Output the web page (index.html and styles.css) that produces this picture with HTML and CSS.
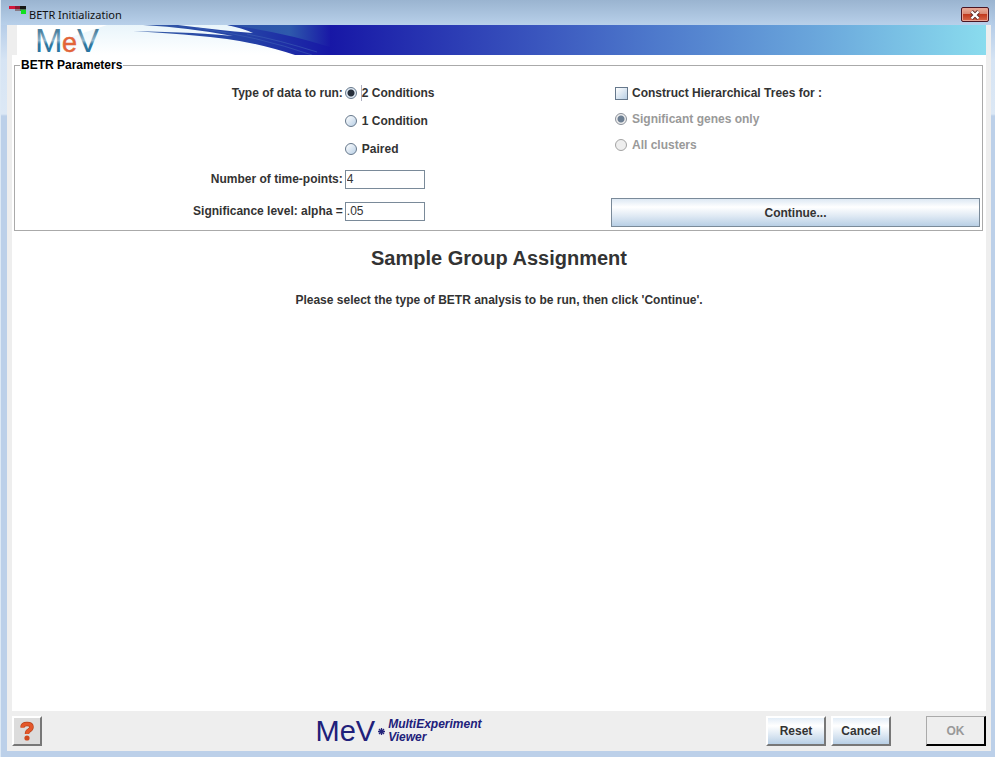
FILE: index.html
```html
<!DOCTYPE html>
<html lang="en">
<head>
<meta charset="utf-8">
<title>BETR Initialization</title>
<link rel="stylesheet" href="styles.css">
</head>
<body>
<div class="window">
  <header class="titlebar">
    <svg class="app-icon" width="17" height="9" viewBox="0 0 17 9" aria-hidden="true">
      <path fill="#d4163c" d="M0 0h6v3H0z"/><path fill="#8e1630" d="M6 0h5v3H6z"/><path fill="#161616" d="M11 0h6v3h-6z"/>
      <path fill="#8a7882" d="M6 3h5v2H6z"/><path fill="#4a7a50" d="M11 3h6v2h-6z"/><path fill="#10e020" d="M12 4h5v4h-5z"/>
    </svg>
    <span class="title">BETR Initialization</span>
    <button class="close" type="button" aria-label="Close">
      <svg width="12" height="10" viewBox="0 0 12 10" aria-hidden="true">
        <path d="M2.500 1.500l7 7M9.500 1.500l-7 7" stroke="#5a2a2a" stroke-width="4" fill="none"/>
        <path d="M2.500 1.500l7 7M9.500 1.500l-7 7" stroke="#fff" stroke-width="2.400" fill="none"/>
      </svg>
    </button>
  </header>

  <form class="dialog">
    <div class="banner">
      <svg class="banner-art" width="313" height="30" viewBox="0 0 313 30" role="img" aria-label="MeV">
        <defs>
          <linearGradient id="steel" x1="0" y1="0" x2="0" y2="1">
            <stop offset="0.250" stop-color="#4a7f9e"/><stop offset="0.500" stop-color="#8fb5cb"/>
            <stop offset="0.600" stop-color="#2f779f"/><stop offset="1" stop-color="#2474a4"/>
          </linearGradient>
          <linearGradient id="paper" x1="0" y1="0" x2="0" y2="1">
            <stop offset="0" stop-color="#e9f5fb"/><stop offset="1" stop-color="#fff"/>
          </linearGradient>
          <linearGradient id="wave" x1="0" y1="0" x2="1" y2="0">
            <stop offset="0" stop-color="#3c63a8"/><stop offset="0.300" stop-color="#2a4ca6"/>
            <stop offset="0.600" stop-color="#2340a6"/><stop offset="1" stop-color="#1717a6"/>
          </linearGradient>
          <linearGradient id="sheen" x1="0" y1="0" x2="1" y2="0">
            <stop offset="0" stop-color="#2c50a8"/><stop offset="0.600" stop-color="#2e5aac"/><stop offset="1" stop-color="#1919a6"/>
          </linearGradient>
        </defs>
        <path fill="#fff" d="M0 0h313v30H0z"/>
        <path fill="url(#paper)" d="M90 0H313V30H0Z"/>
        <path fill="url(#wave)" d="M116 6Q185 7.500 216 11Q175 3 126 0H161Q200 5 236 8Q225 3 210 0H313V30H278Q240 18 210 14Q170 9 116 6Z"/>
        <path fill="url(#sheen)" d="M211 0H313V22Q262 6 211 0Z"/>
        <path d="M180 3Q240 11 295 30M230 9Q262 15 300 27" fill="none" stroke="#4468b8" opacity="0.500"/>
        <g font-family="Liberation Sans, sans-serif" font-size="33" font-weight="400">
          <text x="18" y="27" fill="url(#steel)">M</text>
          <text x="60" y="27" fill="url(#steel)">V</text>
          <text x="45" y="27" fill="#e2643a" stroke="#e2643a" stroke-width="0.500" font-size="27">e</text>
        </g>
      </svg>
      <div class="banner-fade"></div>
    </div>

    <main class="content">
      <fieldset class="params">
        <legend>BETR Parameters</legend>
        <div class="columns">
          <div class="settings">
            <span class="caption" id="data-type">Type of data to run:</span>
            <div class="choice"><input type="radio" name="type" id="two" aria-describedby="data-type" checked><label class="focused" for="two">2 Conditions</label></div>
            <div class="choice under"><input type="radio" name="type" id="one"><label for="one">1 Condition</label></div>
            <div class="choice under"><input type="radio" name="type" id="paired"><label for="paired">Paired</label></div>
            <label class="caption" for="points">Number of time-points:</label>
            <input class="field" type="text" id="points" value="4">
            <label class="caption" for="alpha">Significance level: alpha =</label>
            <input class="field" type="text" id="alpha" value=".05">
          </div>
          <div class="trees">
            <div class="choice"><input type="checkbox" id="trees"><label for="trees">Construct Hierarchical Trees for :</label></div>
            <div class="choice"><input type="radio" name="scope" id="genes" checked disabled><label for="genes">Significant genes only</label></div>
            <div class="choice"><input type="radio" name="scope" id="clusters" disabled><label for="clusters">All clusters</label></div>
            <button class="continue" type="button">Continue...</button>
          </div>
        </div>
      </fieldset>
      <section class="assignment">
        <h1>Sample Group Assignment</h1>
        <p>Please select the type of BETR analysis to be run, then click 'Continue'.</p>
      </section>
    </main>

    <footer class="actions">
      <button class="raised help" type="button" aria-label="Help">
        <svg width="16" height="22" viewBox="0 0 16 22" aria-hidden="true">
          <path d="M3.500 7.500Q3.500 4 8 4Q12.500 4 12.500 7Q12.500 9 10 10.500Q8 11.500 8 14" fill="none" stroke="#b8431c" stroke-width="4.500"/>
          <path d="M3.500 7.500Q3.500 4 8 4Q12.500 4 12.500 7Q12.500 9 10 10.500Q8 11.500 8 14" fill="none" stroke="#e4572a" stroke-width="3.200"/>
          <circle cx="8" cy="18" r="2.600" fill="#d04a20"/>
        </svg>
      </button>
      <div class="brand">
        <span class="brand-name">MeV</span>
        <svg width="7" height="7" viewBox="0 0 7 7" aria-hidden="true"><path d="M3.500 0v7M0 3.500h7M1 1l5 5M6 1l-5 5" stroke="#24247a" stroke-width="1.300"/></svg>
        <span class="brand-sub">MultiExperiment<br>Viewer</span>
      </div>
      <div class="buttons">
        <button class="raised" type="reset">Reset</button>
        <button class="raised" type="button">Cancel</button>
        <button class="ok" type="submit" disabled>OK</button>
      </div>
    </footer>
  </form>
</div>
</body>
</html>
```
FILE: styles.css
```css
* { box-sizing: border-box; }

body {
  margin: 0;
  font: bold 12px/16px "Liberation Sans", Arial, sans-serif;
  color: #333;
}

button, input { font: inherit; color: inherit; margin: 0; }

.window {
  display: flex;
  flex-direction: column;
  min-height: 100vh;
  padding: 0 4px 6px 6px;
  background: linear-gradient(#9ab4d0, #b6cde8 25px, #d6e4f4 60px, #dce8f5 114px, #bcd0e9 116px);
  border-left: 1px solid #dde9f5;
}

/* Title bar */
.titlebar {
  display: flex;
  align-items: flex-start;
  height: 25px;
  margin: 0 -1px 0 -6px;
  padding: 6px 3px 0 8px;
  background: linear-gradient(#9ab4d0, #b8d0ea);
}
.title {
  flex: 1;
  margin-left: 3px;
  font: 11px/18px "Noto Sans", sans-serif;
  color: #111;
}
.close {
  display: flex;
  align-items: center;
  justify-content: center;
  width: 28px;
  height: 15px;
  margin-top: 1px;
  padding: 0;
  border: 1px solid #4b1622;
  border-radius: 2px;
  background: linear-gradient(#eab09c, #d98873 45%, #c23a1e 50%, #d8694c);
  box-shadow: inset 0 0 0 1px #e9a595;
}

.dialog {
  flex: 1;
  display: flex;
  flex-direction: column;
  padding: 0 5px;
  background: #eee;
}

/* Banner */
.banner { display: flex; height: 30px; margin-left: 5px; }
.banner-art { flex: none; overflow: visible; }
.banner-fade {
  flex: 1;
  background: linear-gradient(to right, #1717a6, #4d78cb 49%, #6ba8dc 75%, #8adcee);
}

.content { flex: 1; background: #fff; }

/* Parameters */
.params {
  min-width: 0;
  margin: 2px 3px 0 2px;
  padding: 6px 2px 3px 0;
  border: 1px solid #aaa;
}
.params legend {
  margin-left: 5px;
  padding: 0 1px;
  color: #000;
}
.columns { display: grid; grid-template-columns: 596fr 369fr; }
.settings {
  display: grid;
  grid-template-columns: 55% 1fr;
  grid-template-rows: 28px 28px 28px 32px 32px;
  column-gap: 2px;
  align-items: center;
}
.caption { text-align: right; }
.under { grid-column: 2; }
.choice { display: flex; align-items: center; gap: 4px; }
.choice label { padding-left: 1px; }
.choice .focused { border-left: 1px solid #b0b0c0; padding-left: 0; }

input[type="radio"], input[type="checkbox"] {
  appearance: none;
  width: 12px;
  height: 12px;
  border: 1px solid #66788c;
  background: linear-gradient(135deg, #fff, #b8cfe5);
}
input[type="checkbox"] { width: 13px; height: 13px; margin-right: -1px; }
input[type="radio"] { border-radius: 50%; }
input[type="radio"]:checked {
  background: radial-gradient(circle, #27303c 3px, #dfe9f3 4px);
}
input[type="radio"]:disabled { border-color: #a3a3a3; background: #eee; }
input[type="radio"]:disabled:checked {
  border-color: #8a9099;
  background: radial-gradient(circle, #6d7f93 3px, #eee 4px);
}
input:disabled + label { color: #999; }

.field {
  width: 80px;
  height: 19px;
  padding: 0 1px;
  border: 1px solid #7a8a99;
  border-radius: 0;
  background: #fff;
  font-weight: normal;
}

.trees { display: flex; flex-direction: column; padding-top: 1px; }
.trees .choice { height: 26px; margin-left: 4px; }
.continue {
  height: 29px;
  margin-top: auto;
  padding: 0;
  border: 1px solid #7a8a99;
  background: linear-gradient(#dde8f3, #fff 30%, #dde8f3 65%, #b8cfe5);
}

/* Assignment */
.assignment { text-align: center; }
.assignment h1 { margin: 15px 0 0; font-size: 20px; line-height: 24px; }
.assignment p { margin: 22px 0 0; }

/* Footer */
.actions { display: flex; align-items: center; height: 40px; }
.raised, .ok { width: 60px; height: 30px; padding: 0; border: 2px solid; }
.raised {
  border-color: #fff #777 #777 #fff;
  background: linear-gradient(#e3edf7, #fff 30%, #dde8f3 65%, #b8cfe5);
}
.ok {
  margin-left: 30px;
  border-color: #aaa #000 #000 #aaa;
  border-width: 1px 2px 2px 1px;
  background: #eee;
  color: #999;
}
.help {
  display: flex;
  align-items: center;
  justify-content: center;
  width: 30px;
  background: #dcdcdc;
}
.brand {
  display: flex;
  align-items: center;
  gap: 3px;
  margin: 0 auto;
  color: #20207a;
}
.brand-name { font-size: 29px; font-weight: normal; line-height: 32px; }
.brand-sub { font-style: italic; line-height: 13px; }
.buttons { display: flex; gap: 5px; padding-left: 11px; }
```
